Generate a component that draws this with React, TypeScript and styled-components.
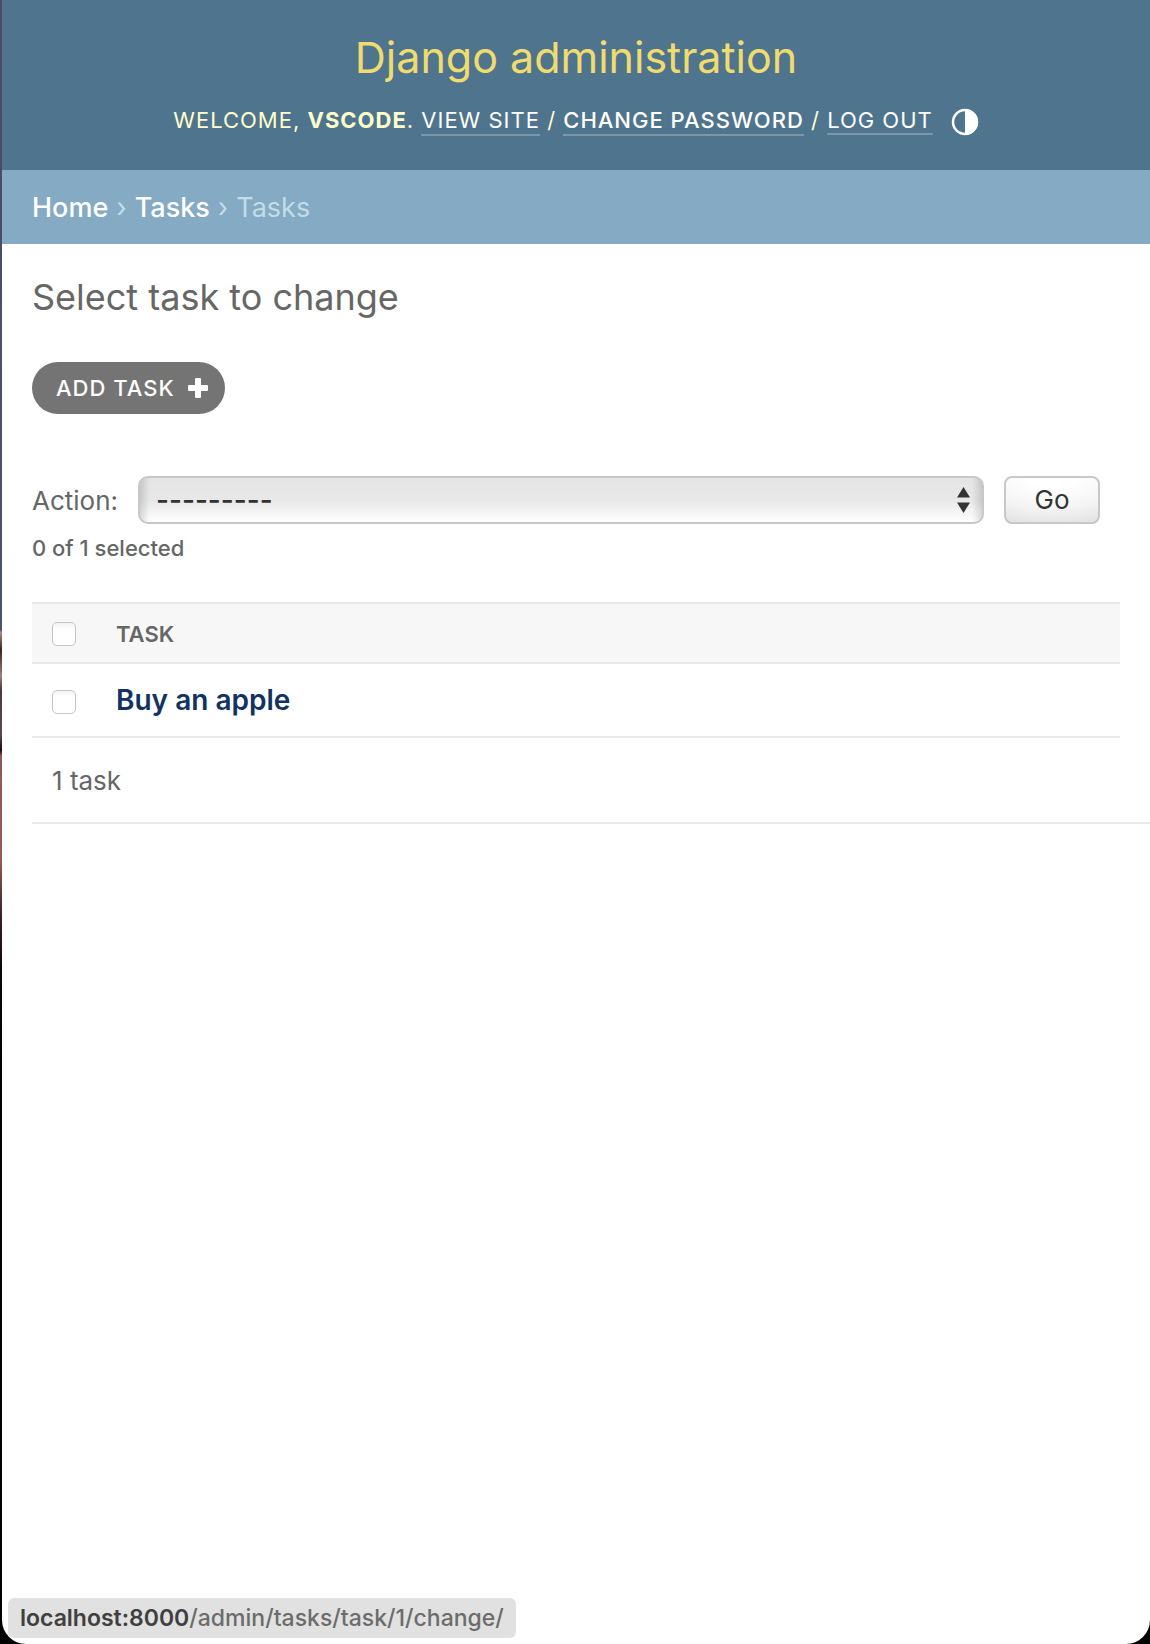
import React, { useState } from 'react';
import styled, { createGlobalStyle } from 'styled-components';

const GlobalStyle = createGlobalStyle`
  *, *::before, *::after { box-sizing: border-box; }
  body {
    margin: 0;
    font-family: Inter, Roboto, "Liberation Sans", sans-serif;
    font-size: 26px;
    color: #666;
  }
`;

const Desktop = styled.div`
  min-height: 100vh;
  padding-left: 2px;
  display: flex;
  background: linear-gradient(
    #4a4c66 0, #4d5170 630px, #b08a80 632px, #3a2424 650px, #a08078 676px,
    #4a3a40 690px, #5a4a50 735px, #140c10 750px, #8d5a58 756px, #965b56 860px,
    #3a2228 915px, #0a0608 970px, #000 1100px
  );
`;

const Window = styled.div`
  position: relative;
  flex: 1;
  min-width: 0;
  display: flex;
  flex-direction: column;
  background: #fff;
  border-radius: 0 0 24px 24px;
`;

const Header = styled.header`
  display: flex;
  flex-direction: column;
  align-items: center;
  gap: 19px;
  padding: 29px 30px 34px;
  background: #4f748d;
`;

const SiteName = styled.h1`
  margin: 0;
  font-size: 43px;
  line-height: 56px;
  font-weight: 400;
  a { color: #f0dc6e; text-decoration: none; }
`;

const UserTools = styled.div`
  display: flex;
  align-items: center;
  gap: 18px;
  line-height: 32px;
  font-size: 22px;
  letter-spacing: 1px;
  text-transform: uppercase;
  color: #ffffcc;
`;

const ToolLink = styled.a`
  color: #fff;
  font-weight: ${(p: { $strong?: boolean }) => (p.$strong ? 500 : 400)};
  text-decoration: none;
  padding-bottom: 1px;
  border-bottom: 2px solid rgba(255, 255, 255, 0.25);
`;

const LogoutButton = styled.button`
  padding: 0;
  border: 0;
  border-bottom: 2px solid rgba(255, 255, 255, 0.25);
  background: none;
  color: #fff;
  font: inherit;
  line-height: 25px;
  letter-spacing: inherit;
  text-transform: inherit;
`;

const ThemeToggle = styled.button`
  display: flex;
  padding: 0;
  border: 0;
  background: none;
  margin-top: 4px;
`;

const Breadcrumbs = styled.nav`
  display: flex;
  gap: 8px;
  padding: 21px 30px 19px;
  background: #84aac4;
  color: #c4dce8;
  font-size: 27px;
  line-height: 34px;
  a { color: #fff; font-weight: 500; text-decoration: none; }
`;

const Content = styled.main`
  padding: 28px 0 30px 30px;
`;

const PageTitle = styled.h2`
  margin: 0 0 40px;
  font-size: 36px;
  line-height: 50px;
  font-weight: 400;
`;

const AddLink = styled.a`
  display: inline-flex;
  align-items: center;
  gap: 12px;
  height: 52px;
  padding: 0 16px 0 24px;
  border-radius: 26px;
  background: #747474;
  color: #fff;
  font-size: 22px;
  font-weight: 500;
  letter-spacing: 1px;
  text-transform: uppercase;
  text-decoration: none;
`;

const Actions = styled.form`
  margin: 62px 30px 38px 0;
`;

const ActionRow = styled.div`
  display: flex;
  align-items: center;
  gap: 20px;
  height: 48px;
  padding-right: 20px;
  font-size: 26px;
`;

const SelectWrap = styled.div`
  position: relative;
  flex: 1;
  svg { position: absolute; right: 14px; top: 11px; pointer-events: none; }
`;

const ActionSelect = styled.select`
  display: block;
  width: 100%;
  height: 48px;
  padding: 0 44px 0 16px;
  appearance: none;
  border: 2px solid #c8c8c8;
  border-radius: 10px;
  background:
    linear-gradient(90deg, rgba(0, 0, 0, 0.13), rgba(0, 0, 0, 0) 10px),
    linear-gradient(270deg, rgba(0, 0, 0, 0.13), rgba(0, 0, 0, 0) 10px),
    linear-gradient(#e4e4e4, #e8e8e8 50%, #fff);
  color: #333;
  font: 500 28px Inter, Roboto, sans-serif;
`;

const GoButton = styled.button`
  width: 96px;
  height: 48px;
  padding: 0 0 2px;
  border: 2px solid #c8c8c8;
  border-radius: 8px;
  background: radial-gradient(ellipse 120% 110% at 50% 0, #fff 20%, #f5f5f5 60%, #e2e2e2 100%);
  color: #333;
  font: 400 26px Inter, Roboto, sans-serif;
`;

const Counter = styled.p`
  margin: 9px 0 0;
  font-size: 22px;
  font-weight: 500;
  line-height: 30px;
  padding-bottom: 1px;
`;

const ResultTable = styled.table`
  width: calc(100% - 30px);
  border-collapse: separate;
  border-spacing: 0;
  text-align: left;
  border-bottom: 2px solid #e8e8e8;
`;

const HeadCell = styled.th`
  height: 62px;
  padding: 2px 20px 0;
  border-top: 2px solid #e8e8e8;
  border-bottom: 2px solid #e8e8e8;
  background: #f7f7f7;
  font-size: 22px;
  font-weight: 600;
  text-transform: uppercase;
`;

const CheckHead = styled(HeadCell)`
  width: 64px;
`;

const Cell = styled.td`
  height: 72px;
  padding: 4px 20px 0;
`;

const TaskCell = styled.th`
  height: 72px;
  padding: 0 20px;
  font-size: 28px;
  font-weight: 600;
  a { color: #123262; text-decoration: none; }
`;

const Check = styled.input`
  display: block;
  appearance: none;
  width: 24px;
  height: 24px;
  margin: 0;
  border: 1px solid #c6c6c6;
  border-radius: 5px;
  background: linear-gradient(#f2f2f2, #fff 6px);
  &:checked { background: #2a78e4; }
`;

const Paginator = styled.p`
  margin: 0;
  padding: 24px 20px 22px;
  border-bottom: 2px solid #e8e8e8;
  font-size: 26px;
  line-height: 38px;
`;

const StatusBar = styled.div`
  position: absolute;
  left: 6px;
  bottom: 6px;
  height: 40px;
  padding: 0 12px;
  border-radius: 6px;
  background: #e1e1e1;
  color: #6c6c6c;
  font-size: 23px;
  font-weight: 500;
  line-height: 40px;
  white-space: nowrap;
  b { color: #404040; font-weight: 600; }
`;

export default function App() {
  const [selected, setSelected] = useState(false);
  const toggle = () => setSelected(!selected);
  return (
    <>
      <GlobalStyle />
      <Desktop>
        <Window>
          <Header>
            <SiteName><a href="#">Django administration</a></SiteName>
            <UserTools>
              <div>
                Welcome, <strong>vscode</strong>.{' '}
                <ToolLink href="#">View site</ToolLink> /{' '}
                <ToolLink href="#" $strong>Change password</ToolLink> /{' '}
                <LogoutButton type="button">Log out</LogoutButton>
              </div>
              <ThemeToggle type="button" aria-label="Toggle theme">
                <svg width="28" height="28" viewBox="0 0 28 28">
                  <circle cx="14" cy="14" r="12" fill="none" stroke="#fff" strokeWidth="2.5" />
                  <path d="M14 1a13 13 0 0 1 0 26z" fill="#fff" />
                </svg>
              </ThemeToggle>
            </UserTools>
          </Header>
          <Breadcrumbs aria-label="Breadcrumbs">
            <a href="#">Home</a>
            <span>›</span>
            <a href="#">Tasks</a>
            <span>›</span>
            <span>Tasks</span>
          </Breadcrumbs>
          <Content>
            <PageTitle>Select task to change</PageTitle>
            <AddLink href="#">
              Add task
              <svg width="22" height="22" viewBox="0 0 22 22" fill="#fff">
                <rect x="8" y="1" width="6" height="20" rx="1" />
                <rect x="1" y="8" width="20" height="6" rx="1" />
              </svg>
            </AddLink>
            <Actions onSubmit={(e) => e.preventDefault()}>
              <ActionRow>
                <label htmlFor="action">Action:</label>
                <SelectWrap>
                  <ActionSelect id="action">
                    <option>---------</option>
                    <option>Delete selected tasks</option>
                  </ActionSelect>
                  <svg width="13" height="26" viewBox="0 0 13 26" fill="#333">
                    <path d="M6.500 0L13 10.500H0zM0 15.500H13L6.500 26z" />
                  </svg>
                </SelectWrap>
                <GoButton type="submit">Go</GoButton>
              </ActionRow>
              <Counter>{selected ? 1 : 0} of 1 selected</Counter>
            </Actions>
            <ResultTable>
              <thead>
                <tr>
                  <CheckHead>
                    <Check type="checkbox" aria-label="Select all tasks" checked={selected} onChange={toggle} />
                  </CheckHead>
                  <HeadCell>Task</HeadCell>
                </tr>
              </thead>
              <tbody>
                <tr>
                  <Cell>
                    <Check type="checkbox" aria-label="Select Buy an apple" checked={selected} onChange={toggle} />
                  </Cell>
                  <TaskCell scope="row"><a href="#">Buy an apple</a></TaskCell>
                </tr>
              </tbody>
            </ResultTable>
            <Paginator>1 task</Paginator>
          </Content>
          <StatusBar><b>localhost:8000</b>/admin/tasks/task/1/change/</StatusBar>
        </Window>
      </Desktop>
    </>
  );
}
